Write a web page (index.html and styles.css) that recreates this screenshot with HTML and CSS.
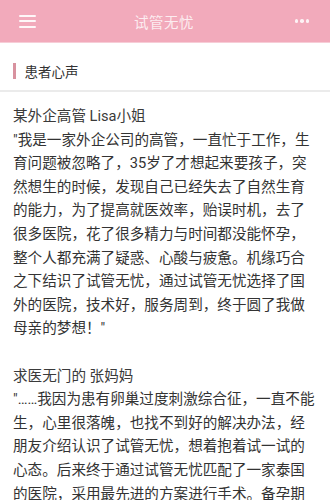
FILE: index.html
```html
<!DOCTYPE html>
<html lang="zh-CN">
  <head>
    <meta charset="UTF-8" />
    <meta name="viewport" content="width=device-width, initial-scale=1.0" />
    <title>试管无忧 - 患者心声</title>
    <link rel="stylesheet" href="styles.css">
  </head>
  <body>
    <div class="topbar">
      <div class="menu-btn">
        <span></span>
        <span></span>
        <span></span>
      </div>
      <div class="topbar-title">试管无忧</div>
      <div class="more-btn">
        <span></span>
        <span></span>
        <span></span>
      </div>
    </div>

    <div class="section-title">
      <span class="mark"></span>
      <span>患者心声</span>
    </div>

    <main class="stories">
      <div class="story">
        <div class="story-name">某外企高管 Lisa小姐</div>
        <p>"我是一家外企公司的高管，一直忙于工作，生育问题被忽略了，35岁了才想起来要孩子，突然想生的时候，发现自己已经失去了自然生育的能力，为了提高就医效率，贻误时机，去了很多医院，花了很多精力与时间都没能怀孕，整个人都充满了疑惑、心酸与疲惫。机缘巧合之下结识了试管无忧，通过试管无忧选择了国外的医院，技术好，服务周到，终于圆了我做母亲的梦想！"</p>
      </div>

      <div class="story">
        <div class="story-name">求医无门的 张妈妈</div>
        <p>"……我因为患有卵巢过度刺激综合征，一直不能生，心里很落魄，也找不到好的解决办法，经朋友介绍认识了试管无忧，想着抱着试一试的心态。后来终于通过试管无忧匹配了一家泰国的医院，采用最先进的方案进行手术。备孕期间顾问全程陪同，非常贴心，现在宝宝已经一岁了，真的很感谢试管无忧！"</p>
      </div>
    </main>
  </body>
</html>
```

FILE: styles.css
```css
body {
  margin: 0;
  padding: 0;
  background: #fff;
  font-family: Roboto, "Noto Sans CJK SC", sans-serif;
  color: #333;
}

.topbar {
  display: grid;
  grid-template-columns: 1fr auto 1fr;
  align-items: center;
  height: 42px;
  padding: 0 21px 0 19px;
  background-color: #f2aabb;
  border-bottom: 1px solid #f7cdd7;
}

.menu-btn {
  display: flex;
  flex-direction: column;
  gap: 3.5px;
  width: 17px;
}
.menu-btn span {
  display: block;
  height: 2px;
  background: rgba(255, 255, 255, 0.9);
  border-radius: 1px;
}

.topbar-title {
  font-size: 14.5px;
  color: rgba(255, 255, 255, 0.8);
  letter-spacing: 0.5px;
}

.more-btn {
  display: flex;
  justify-content: flex-end;
  gap: 2px;
}
.more-btn span {
  width: 3.5px;
  height: 3.5px;
  border-radius: 50%;
  background: rgba(255, 255, 255, 0.85);
}

.section-title {
  display: flex;
  align-items: center;
  box-sizing: border-box;
  height: 49px;
  padding: 8px 0 0 13px;
  font-size: 13.5px;
  color: #333;
  border-bottom: 2px solid #ebebeb;
}
.section-title .mark {
  width: 2.5px;
  height: 16px;
  margin-right: 9px;
  background: #d8929f;
}

.stories {
  padding: 13px 13px 0 13px;
  font-size: 14.6px;
  line-height: 23.6px;
}

.story {
  margin-bottom: 23.6px;
}

.story-name {
  color: #3a3a3a;
}

.story p {
  margin: 0;
}
```
